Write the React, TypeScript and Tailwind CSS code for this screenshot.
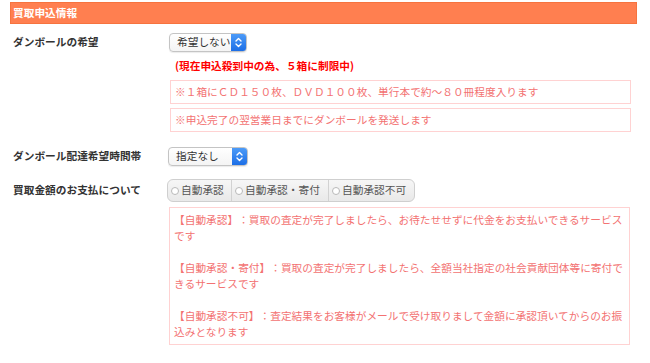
import React from 'react';

const FONT = "font-['Hiragino_Kaku_Gothic_ProN','Noto_Sans_CJK_JP',sans-serif] [text-spacing-trim:space-all]";

const SelectBox: React.FC<{ label: string; width: string }> = ({ label, width }) => (
    <div className={`${width} h-[19px] flex rounded-[4px] border border-[#c4c4c4] bg-gradient-to-b from-white to-[#f4f4f4] shadow-[0_1px_1px_rgba(0,0,0,0.08)] overflow-hidden`}>
        <div className="flex-1 flex items-center pl-[7px] text-[10.7px] text-[#333] leading-none whitespace-nowrap">{label}</div>
        <div className="w-[15px] h-full shrink-0 bg-gradient-to-b from-[#4c9bf8] to-[#1c6ee6] flex items-center justify-center">
            <svg width="7" height="11" viewBox="0 0 7 11" fill="none" stroke="white" strokeWidth="1.4" strokeLinecap="round" strokeLinejoin="round">
                <path d="M1 4 L3.5 1.5 L6 4" />
                <path d="M1 7 L3.5 9.5 L6 7" />
            </svg>
        </div>
    </div>
);

const Radio: React.FC<{ label: string; width: string; last?: boolean }> = ({ label, width, last }) => (
    <div className={`${width} h-full flex items-center pl-[3px] gap-[2px] ${last ? '' : 'border-r border-[#d2d2d2]'}`}>
        <span className="w-[8px] h-[8px] rounded-full border border-[#b8b8b8] bg-white shrink-0" />
        <span className="text-[10.7px] text-[#555] leading-none whitespace-nowrap">{label}</span>
    </div>
);

const Row: React.FC<{ label: string; children: React.ReactNode; className?: string }> = ({ label, children, className }) => (
    <div className={`flex ${className ?? ''}`}>
        <div className="w-[155px] shrink-0 pl-[13px] h-[19px] flex items-center text-[10.7px] font-bold text-[#333]">{label}</div>
        <div className="flex-1">{children}</div>
    </div>
);

export default function App() {
    return (
        <div className={`w-[650px] h-[363px] bg-white overflow-hidden ${FONT}`}>
            {/* header */}
            <div className="ml-[10px] mt-[2px] w-[627px] h-[22px] bg-[#ff7f50] border border-[#f6733f] flex items-center pl-[2px] text-[10.7px] font-bold text-white">
                買取申込情報
            </div>

            {/* ダンボールの希望 */}
            <Row label="ダンボールの希望" className="mt-[9px]">
                <div className="ml-[14px]">
                    <SelectBox label="希望しない" width="w-[78px]" />
                    <div className="mt-[6px] pl-[6px] leading-[16px] text-[10.7px] font-bold text-[#f00]">
                        (現在申込殺到中の為、５箱に制限中)
                    </div>
                    <div className="mt-[6px] ml-[1px] w-[461px] border border-[#ffd2d2] px-[4px] py-[3px] leading-[16px] text-[10.7px] text-[#f37272]">
                        ※１箱にＣＤ１５０枚、ＤＶＤ１００枚、単行本で約〜８０冊程度入ります
                    </div>
                    <div className="mt-[4px] ml-[1px] w-[461px] border border-[#ffd2d2] px-[4px] py-[3px] leading-[16px] text-[10.7px] text-[#f37272]">
                        ※申込完了の翌営業日までにダンボールを発送します
                    </div>
                </div>
            </Row>

            {/* ダンボール配達希望時間帯 */}
            <Row label="ダンボール配達希望時間帯" className="mt-[15px]">
                <div className="ml-[13px]">
                    <SelectBox label="指定なし" width="w-[80px]" />
                </div>
            </Row>

            {/* 買取金額のお支払について */}
            <div className="flex mt-[13px]">
                <div className="w-[155px] shrink-0 pl-[13px] h-[23px] flex items-center text-[10.7px] font-bold text-[#333]">買取金額のお支払について</div>
                <div className="flex-1 ml-[12px]">
                    <div className="w-[248px] h-[23px] flex rounded-[6px] border border-[#cfcfcf] bg-gradient-to-b from-[#f6f6f6] to-[#e9e9e9] overflow-hidden">
                        <Radio label="自動承認" width="w-[64px]" />
                        <Radio label="自動承認・寄付" width="w-[97px]" />
                        <Radio label="自動承認不可" width="flex-1" last />
                    </div>
                    <div className="mt-[5px] ml-[2px] w-[461px] border border-[#ffd2d2] px-[4px] py-[4px] leading-[16px] text-[10.7px] text-[#f37272]">
                        【自動承認】：買取の査定が完了しましたら、お待たせせずに代金をお支払いできるサービスです
                        <br />
                        <br />
                        【自動承認・寄付】：買取の査定が完了しましたら、全額当社指定の社会貢献団体等に寄付できるサービスです
                        <br />
                        <br />
                        【自動承認不可】：査定結果をお客様がメールで受け取りまして金額に承認頂いてからのお振込みとなります
                    </div>
                </div>
            </div>
        </div>
    );
}
